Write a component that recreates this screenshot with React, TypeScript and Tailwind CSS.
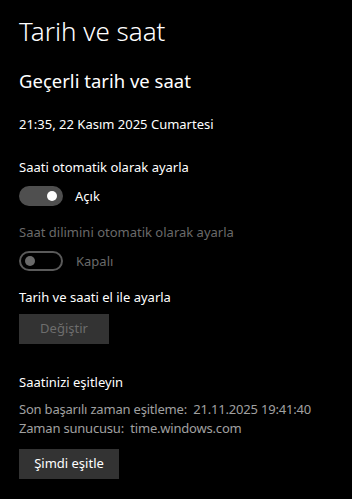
import React from "react";

function ToggleOn() {
  return (
    <div className="flex items-center">
      <div className="w-[44px] h-[20px] rounded-full bg-[#4f4f4f] flex items-center justify-end pr-[6px]">
        <div className="w-[10px] h-[10px] rounded-full bg-white" />
      </div>
      <span className="ml-[12px] text-[13px] leading-[20px] text-white">Açık</span>
    </div>
  );
}

function ToggleOff() {
  return (
    <div className="flex items-center">
      <div className="w-[44px] h-[20px] rounded-full border-2 border-[#5a5a5a] flex items-center pl-[4px]">
        <div className="w-[10px] h-[10px] rounded-full bg-[#6a6a6a]" />
      </div>
      <span className="ml-[13px] text-[13px] leading-[20px] text-[#6a6a6a]">Kapalı</span>
    </div>
  );
}

export default function App() {
  return (
    <div
      className="w-[352px] h-[499px] bg-black text-white pl-[19px] overflow-hidden"
      style={{ fontFamily: '"Segoe UI", "Noto Sans", sans-serif' }}
    >
      <div className="pt-[15px] text-[26px] leading-[32px] font-light">Tarih ve saat</div>
      <div className="mt-[20px] text-[18.5px] leading-[28px]">Geçerli tarih ve saat</div>
      <div className="mt-[19px] text-[13px] leading-[20px]">21:35, 22 Kasım 2025 Cumartesi</div>

      <div className="mt-[23px] text-[13px] leading-[20px]">Saati otomatik olarak ayarla</div>
      <div className="mt-[9px]">
        <ToggleOn />
      </div>

      <div className="mt-[16px] text-[13px] leading-[20px] text-[#6a6a6a]">
        Saat dilimini otomatik olarak ayarla
      </div>
      <div className="mt-[9px]">
        <ToggleOff />
      </div>

      <div className="mt-[16px] text-[13px] leading-[20px]">Tarih ve saati el ile ayarla</div>
      <div className="mt-[7px] w-[90px] h-[30px] bg-[#333333] flex items-center justify-center text-[13px] text-[#6d6d6d]">
        Değiştir
      </div>

      <div className="mt-[28px] text-[13px] leading-[20px]">Saatinizi eşitleyin</div>
      <div className="mt-[8px] text-[13px] leading-[19px] text-[#a0a0a0] tracking-[-0.2px]">
        <div>Son başarılı zaman eşitleme:&nbsp; 21.11.2025 19:41:40</div>
        <div>Zaman sunucusu:&nbsp; time.windows.com</div>
      </div>
      <div className="mt-[11px] w-[100px] h-[30px] bg-[#333333] flex items-center justify-center text-[13px] text-white">
        Şimdi eşitle
      </div>
    </div>
  );
}
